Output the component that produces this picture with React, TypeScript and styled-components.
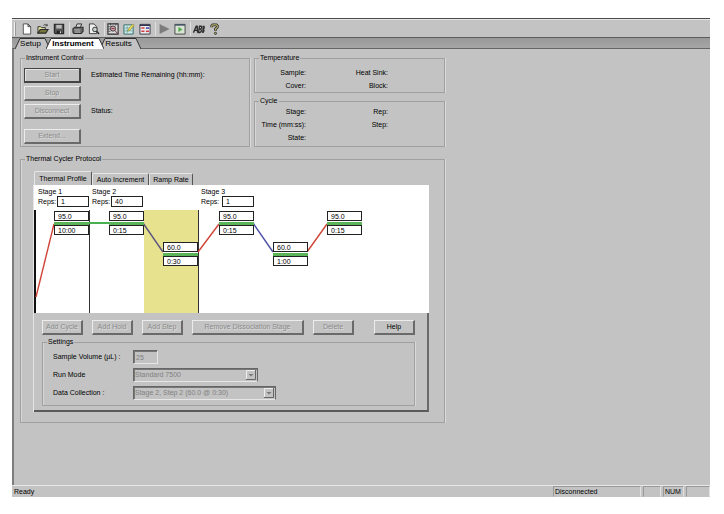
import React from "react";
import styled, { createGlobalStyle, css } from "styled-components";

const GlobalStyle = createGlobalStyle`
  *, *::before, *::after { box-sizing: border-box; }
  html, body { margin: 0; background: #fff; }
  body, button, input, select {
    font-family: "Liberation Sans", Arial, sans-serif;
    font-size: 7px;
    line-height: 8px;
    color: #000;
  }
`;

const raised = css`
  border: 1px solid;
  border-color: #ececec #6a6a6a #6a6a6a #ececec;
`;

const Page = styled.div`
  min-height: 100vh;
  padding: 18px 14px 17px 12px;
  display: flex;
`;

const AppWindow = styled.div`
  flex: 1;
  min-width: 0;
  display: flex;
  flex-direction: column;
  background: #c3c3c3;
  border-top: 1px solid #4c4c4c;
`;

const Toolbar = styled.div`
  display: flex;
  align-items: center;
  height: 18px;
  padding-left: 2px;
  border-top: 1px solid #e6e6e6;
`;

const Grip = styled.div`
  width: 2px;
  height: 14px;
  margin-right: 3px;
  border-left: 1px solid #f2f2f2;
  border-right: 1px solid #999;
`;

const Separator = styled.div`
  width: 3px;
  height: 14px;
  border-right: 1px solid #dedede;
`;

const ToolButton = styled.button`
  width: 16px;
  height: 16px;
  padding: 0;
  border: 0;
  background: none;
  display: grid;
  place-items: center;

  svg { display: block; }
`;

const PageTabs = styled.div`
  display: flex;
  height: 12px;
  padding-left: 3px;
  background: linear-gradient(#999, #a6a6a6);
  border-top: 1px solid #5c5c5c;
  border-bottom: 1px solid #666;
`;

const PageTab = styled.button<{ $active?: boolean; $width: number }>`
  position: relative;
  width: ${(p) => p.$width}px;
  height: 11px;
  margin-right: -4px;
  padding: 0 4px 0 0;
  border: 0;
  background: none;
  font-size: 8px;
  font-weight: ${(p) => (p.$active ? 700 : 400)};
  z-index: ${(p) => (p.$active ? 1 : 0)};

  svg { position: absolute; inset: 0; width: 100%; height: 100%; }
  span { position: relative; }
`;

const Main = styled.main`
  flex: 1;
  padding: 5px 6px 20px;
  border-left: 2px solid #7d7d7d;
`;

const Form = styled.div`
  max-width: 425px;
  display: flex;
  flex-direction: column;
  gap: 8px;
`;

const TopRow = styled.div`
  display: grid;
  grid-template-columns: 230fr 191fr;
  gap: 4px;
`;

const Readouts = styled.div`
  display: flex;
  flex-direction: column;
  justify-content: space-between;
`;

const GroupFrame = styled.fieldset`
  min-width: 0;
  margin: 0;
  padding: 0;
  border: 1px solid #a0a0a0;
  box-shadow: 1px 0 0 #dadada, inset 1px 0 0 #d6d6d6;

  > legend {
    height: 8px;
    margin-left: 4px;
    padding: 0 1px;
  }
`;

const GroupBody = styled.div<{ $pad: string }>`
  padding: ${(p) => p.$pad};
`;

function Group({ title, pad, children }: { title: string; pad: string; children: React.ReactNode }) {
  return (
    <GroupFrame>
      <legend>{title}</legend>
      <GroupBody $pad={pad}>{children}</GroupBody>
    </GroupFrame>
  );
}

const ControlGrid = styled.div`
  display: grid;
  grid-template-columns: 57px 1fr;
  grid-template-rows: 14px 14px 14px 22px;
  gap: 4px 10px;
  align-items: center;

  > button:last-child { align-self: end; }
`;

const Push = styled.button<{ $focus?: boolean; $grow?: boolean }>`
  height: 15px;
  min-width: 41px;
  padding: 0;
  ${raised}
  border-right-width: 2px;
  border-bottom-width: 2px;
  ${(p) => p.$focus && "border: 1px solid #444; border-right-width: 2px; border-bottom-width: 2px; box-shadow: inset 1px 1px #e4e4e4;"}
  ${(p) => p.$grow && "width: 112px; flex-shrink: 1;"}
  background: #c3c3c3;
  white-space: nowrap;

  &:disabled { color: #8a8a8a; text-shadow: 1px 1px 0 #dcdcdc; }
`;

const ReadoutGrid = styled.div`
  display: grid;
  grid-template-columns: 51px 82px;
  grid-auto-rows: 13px;
  align-items: center;
  justify-items: end;
  white-space: nowrap;
`;

const ProfileTabs = styled.div`
  display: flex;
  align-items: flex-end;
  height: 14px;
`;

const ProfileTab = styled.button<{ $active?: boolean; $width: number }>`
  width: ${(p) => p.$width}px;
  height: ${(p) => (p.$active ? 14 : 12)}px;
  padding: 0;
  border: 1px solid;
  border-color: #e6e6e6 #555 transparent #e6e6e6;
  border-bottom: 0;
  border-radius: 2px 2px 0 0;
  background: #c3c3c3;
  white-space: nowrap;
`;

const Panel = styled.div`
  border-right: 2px solid #6a6a6a;
  border-bottom: 2px solid #5a5a5a;
  box-shadow: -1px 0 0 #e6e6e6;
`;

const PanelBody = styled.div`
  padding: 7px 12px 4px 8px;
`;

const ButtonRow = styled.div`
  display: flex;
  gap: 9px;
  padding-bottom: 3px;

  > button:last-child { margin-left: auto; }
`;

const Chart = styled.div`
  position: relative;
  height: 128px;
  margin-right: -2px;
  background: #fff;
  overflow: hidden;

  > svg { position: absolute; top: 0; left: 0; }
`;

const StageHead = styled.div<{ $x: number }>`
  position: absolute;
  top: 3px;
  left: ${(p) => p.$x}px;
`;

const RepsLabel = styled.label<{ $x: number; $span: number }>`
  position: absolute;
  top: 11px;
  left: ${(p) => p.$x}px;
  width: ${(p) => p.$span}px;
  display: flex;
  justify-content: space-between;
  align-items: center;
`;

const NodeBox = styled.div<{ $x: number; $y: number }>`
  position: absolute;
  left: ${(p) => p.$x}px;
  top: ${(p) => p.$y}px;
  width: 35px;
  display: flex;
  flex-direction: column;
`;

const StepBar = styled.div`
  height: 4px;
  padding-top: 1px;
  background: #5cb458;
  border-top: 1px solid #fff;
`;

const ValueField = styled.input<{ $reps?: boolean }>`
  display: block;
  width: ${(p) => (p.$reps ? 32 : 35)}px;
  height: ${(p) => (p.$reps ? 11 : 10)}px;
  padding: 0 0 0 3px;
  border: 1px solid #222;
  border-radius: 0;
  background: #fff;
`;

const SettingsGrid = styled.div`
  display: grid;
  grid-template-columns: 80px 1fr;
  grid-auto-rows: 14px;
  row-gap: 4px;
  align-items: center;
`;

const sunken = css`
  border: 1px solid;
  border-color: #666 #e6e6e6 #e6e6e6 #666;
  box-shadow: inset 1px 1px #777;
  background: #c3c3c3;
  opacity: 1;
  color: #808080;
`;

const VolumeField = styled.input`
  width: 25px;
  height: 14px;
  padding: 0 2px;
  ${sunken}
`;

const DropFrame = styled.div<{ $width: number }>`
  position: relative;
  width: ${(p) => p.$width}px;
  height: 14px;

  > svg { position: absolute; right: 2px; top: 2px; pointer-events: none; }
`;

const Drop = styled.select`
  display: block;
  width: 100%;
  height: 14px;
  padding: 0 12px 0 1px;
  appearance: none;
  border-radius: 0;
  ${sunken}
  border-right-color: #666;
`;

const StatusBar = styled.footer`
  display: flex;
  gap: 2px;
  height: 12px;
  border-top: 1px solid #e8e8e8;
`;

const StatusCell = styled.div<{ $width?: number }>`
  ${(p) => (p.$width ? `width: ${p.$width}px; border: 1px solid; border-color: #999 #e2e2e2 transparent #999;` : "flex: 1; padding-top: 1px;")}
  padding-left: ${(p) => (p.$width ? 1 : 2)}px;
  line-height: 10px;
  white-space: nowrap;
`;

const Ico = ({ children }: { children: React.ReactNode }) => (
  <svg width="12" height="12" viewBox="0 0 13 13" fill="none" stroke="#2c2c2c" aria-hidden="true">
    {children}
  </svg>
);

const icons: Record<string, React.ReactNode> = {
  New: <path d="M2.500 1h5l3 3v8h-8zM7.500 1v3h3" fill="#fff" strokeWidth=".8" />,
  Open: (
    <>
      <path d="M1 11V4h3l1 1h4v2" fill="#e9e7a0" />
      <path d="M1 11l2.500-4H12l-2.500 4z" fill="#77743c" strokeWidth="1.200" />
      <path d="M7 3c1-2 3-2 4 0m0-2v2H9" strokeWidth=".8" />
    </>
  ),
  Save: (
    <>
      <path d="M1.500 1.500h10v10h-9l-1-1z" fill="#555" strokeWidth="1.300" />
      <path d="M3.500 2h6v4h-6z" fill="#b8b8b8" stroke="none" />
      <path d="M4 8.500h5V11H4z" fill="#222" stroke="none" />
      <path d="M7.500 9h1.200v2H7.500z" fill="#ddd" stroke="none" />
    </>
  ),
  Print: (
    <>
      <path d="M4 5l1.500-4h5L9 5z" fill="#ddd" />
      <path d="M1 6l2-1.500h9V9l-2 2.500H2L1 10z" fill="#666" strokeWidth="1.100" />
      <path d="M2.500 7.500h6.500M3 9.800h6" stroke="#ccc" strokeWidth=".9" />
    </>
  ),
  Preview: (
    <>
      <path d="M1.500 1h5l3 3v7.500h-8z" fill="#eee" strokeWidth=".9" />
      <circle cx="7.500" cy="7" r="2.500" fill="#c9d0d0" />
      <path d="M9.300 9l2.700 3" strokeWidth="1.600" />
    </>
  ),
  "Zoom plate": (
    <>
      <path d="M1 1h11v11H1z" fill="#ddd" strokeWidth="1.200" />
      <path d="M1 4h3M1 6.500h3M1 9h3M4 1v2M9.500 1v2" strokeWidth=".7" />
      <circle cx="6.500" cy="6" r="2.800" fill="#dba9b2" />
      <path d="M5 6h3M8.500 8l3 3.500" stroke="#772534" />
    </>
  ),
  "Edit plate": (
    <>
      <path d="M1 2h10v10H1z" fill="#d3e9e9" stroke="#2f6a6a" />
      <path d="M1 5.500h10M1 8.500h10M4.500 3v8" stroke="#599" strokeWidth=".7" />
      <path d="M5 9l1-3 4.500-5L12 2.500 7.500 8z" fill="#e7d95c" stroke="#7e7d30" strokeWidth=".6" />
    </>
  ),
  "Plate list": (
    <>
      <path d="M1 1.500h11v10.500H1z" fill="#eee" stroke="#334" />
      <path d="M1 2.500h11" stroke="#335" strokeWidth="1.500" />
      <path d="M2.500 5.500H6M2.500 9H6" stroke="#cf3e46" strokeWidth="1.700" />
      <path d="M7.500 5.500H11" stroke="#3c49a8" strokeWidth="1.700" />
      <path d="M7.500 9H11" stroke="#cf3e46" strokeWidth="1.700" />
    </>
  ),
  Run: <path d="M2 1.500l10 5-10 5z" fill="#7c7c7c" stroke="#7c7c7c" strokeWidth=".5" />,
  "Run view": (
    <>
      <path d="M1 1.500h11v10.500H1z" fill="#d9e5d4" stroke="#444" />
      <path d="M1 2h11" stroke="#456" strokeWidth="1.800" />
      <path d="M5 4.500l4 2.500-4 2.500z" fill="#55a74c" stroke="#55a74c" strokeWidth=".4" />
    </>
  ),
  Text: (
    <>
      <path d="M.5 10.500L3.500 3.500h1l.5 7M2 8h3" strokeWidth="1.500" />
      <path d="M6 10.300l1-6.800h2q1.500 1.500-1 3 2.500 2-.5 3.800zM6.500 6.500h2" strokeWidth="1.400" />
      <path d="M10.500 10.300l.5-6.800h1q1 2-1 3 2 1.500 0 3.800z" strokeWidth="1.200" />
    </>
  ),
  Help: (
    <>
      <path d="M3 4.500V3l1-1h4l1 1v1.500L7 6.500v2" strokeWidth="3" />
      <path d="M3 4.500V3l1-1h4l1 1v1.500L7 6.500V8" stroke="#b3af68" strokeWidth="1.200" />
      <circle cx="7" cy="11.200" r="1.200" fill="#aaa65a" strokeWidth=".9" />
    </>
  ),
};

const toolGroups = [
  ["New", "Open", "Save"],
  ["Print", "Preview"],
  ["Zoom plate", "Edit plate", "Plate list"],
  ["Run", "Run view"],
  ["Text", "Help"],
];

const pageTabs = [
  { label: "Setup", width: 35 },
  { label: "Instrument", width: 58, active: true },
  { label: "Results", width: 41 },
];

const stages = [
  { x: 4, field: 23, reps: "1" },
  { x: 58, field: 77, reps: "40" },
  { x: 167, field: 188, reps: "1" },
];

const steps = [
  { x: 20, y: 26, temp: "95.0", time: "10:00" },
  { x: 75, y: 26, temp: "95.0", time: "0:15" },
  { x: 129, y: 57, temp: "60.0", time: "0:30" },
  { x: 185, y: 26, temp: "95.0", time: "0:15" },
  { x: 239, y: 57, temp: "60.0", time: "1:00" },
  { x: 293, y: 26, temp: "95.0", time: "0:15" },
];

const ramps = [
  { d: "M2 112L20 39", color: "#cf4436" },
  { d: "M109 38L129 67", color: "#5b5580" },
  { d: "M164 67L185 39", color: "#cf4436" },
  { d: "M219 38L239 67", color: "#4c50a6" },
  { d: "M273 67L293 39", color: "#cf4436" },
];

function DropDown({ id, value, width }: { id: string; value: string; width: number }) {
  return (
    <DropFrame $width={width}>
      <Drop id={id} disabled>
        <option>{value}</option>
      </Drop>
      <svg width="10" height="10" viewBox="0 0 10 10" aria-hidden="true">
        <path d="M0 0h10v10H0z" fill="#c3c3c3" />
        <path d="M.5 10V.5H10" fill="none" stroke="#eee" />
        <path d="M0 9.500h9.500V0" fill="none" stroke="#666" />
        <path d="M2.500 4h5L5 6.500z" fill="#777" />
      </svg>
    </DropFrame>
  );
}

function ProfileChart() {
  return (
    <Chart>
      <svg width="395" height="128" viewBox="0 0 395 128" fill="none" aria-hidden="true">
        <path d="M110 25h54v103h-54z" fill="#e7e28e" />
        <path d="M1 25v103" stroke="#111" strokeWidth="2" />
        <path d="M55.500 25v103M164.500 25v103" stroke="#333" />
        {ramps.map((r) => (
          <path key={r.d} d={r.d} stroke={r.color} strokeWidth="1.400" />
        ))}
        <path d="M55 38h20" stroke="#49b052" strokeWidth="2" />
      </svg>
      {stages.map((s, i) => (
        <React.Fragment key={s.x}>
          <StageHead $x={s.x}>Stage {i + 1}</StageHead>
          <RepsLabel $x={s.x} $span={s.field - s.x + 32}>
            Reps:
            <ValueField $reps aria-label={`Stage ${i + 1} reps`} defaultValue={s.reps} />
          </RepsLabel>
        </React.Fragment>
      ))}
      {steps.map((s, i) => (
        <NodeBox key={s.x} $x={s.x} $y={s.y}>
          <ValueField aria-label={`Step ${i + 1} temperature`} defaultValue={s.temp} />
          <StepBar />
          <ValueField aria-label={`Step ${i + 1} time`} defaultValue={s.time} />
        </NodeBox>
      ))}
    </Chart>
  );
}

export default function App() {
  return (
    <>
      <GlobalStyle />
      <Page>
        <AppWindow>
          <Toolbar>
            <Grip />
            {toolGroups.map((group, g) => (
              <React.Fragment key={group[0]}>
                {g > 0 && <Separator />}
                {group.map((name) => (
                  <ToolButton key={name} type="button" aria-label={name}>
                    <Ico>{icons[name]}</Ico>
                  </ToolButton>
                ))}
              </React.Fragment>
            ))}
          </Toolbar>
          <PageTabs role="tablist">
            {pageTabs.map((t) => (
              <PageTab key={t.label} type="button" role="tab" aria-selected={!!t.active} $active={t.active} $width={t.width}>
                <svg viewBox={`0 0 ${t.width} 11`} preserveAspectRatio="none" aria-hidden="true">
                  <path
                    d={`M0 11L5 .5H${t.width - 5}L${t.width} 11`}
                    fill={t.active ? "#fff" : "#c3c3c3"}
                    stroke="#333"
                  />
                </svg>
                <span>{t.label}</span>
              </PageTab>
            ))}
          </PageTabs>
          <Main>
            <Form>
              <TopRow>
                <Group title="Instrument Control" pad="6px 3px 2px">
                  <ControlGrid>
                    <Push type="button" disabled $focus>Start</Push>
                    <span>Estimated Time Remaining (hh:mm):</span>
                    <Push type="button" disabled>Stop</Push>
                    <span />
                    <Push type="button" disabled>Disconnect</Push>
                    <span>Status:</span>
                    <Push type="button" disabled>Extend...</Push>
                  </ControlGrid>
                </Group>
                <Readouts>
                  <Group title="Temperature" pad="4px 0 0">
                    <ReadoutGrid>
                      <span>Sample:</span>
                      <span>Heat Sink:</span>
                      <span>Cover:</span>
                      <span>Block:</span>
                    </ReadoutGrid>
                  </Group>
                  <Group title="Cycle" pad="0 0 2px">
                    <ReadoutGrid>
                      <span>Stage:</span>
                      <span>Rep:</span>
                      <span>Time (mm:ss):</span>
                      <span>Step:</span>
                      <span>State:</span>
                    </ReadoutGrid>
                  </Group>
                </Readouts>
              </TopRow>
              <Group title="Thermal Cycler Protocol" pad="8px 15px 10px 13px">
                <ProfileTabs role="tablist">
                  <ProfileTab type="button" role="tab" aria-selected $active $width={58}>Thermal Profile</ProfileTab>
                  <ProfileTab type="button" role="tab" $width={57}>Auto Increment</ProfileTab>
                  <ProfileTab type="button" role="tab" $width={44}>Ramp Rate</ProfileTab>
                </ProfileTabs>
                <Panel>
                  <ProfileChart />
                  <PanelBody>
                    <ButtonRow>
                      <Push type="button" disabled>Add Cycle</Push>
                      <Push type="button" disabled>Add Hold</Push>
                      <Push type="button" disabled>Add Step</Push>
                      <Push type="button" disabled $grow>Remove Dissociation Stage</Push>
                      <Push type="button" disabled>Delete</Push>
                      <Push type="button">Help</Push>
                    </ButtonRow>
                    <Group title="Settings" pad="4px 10px 5px">
                      <SettingsGrid>
                        <label htmlFor="volume">Sample Volume (µL) :</label>
                        <VolumeField id="volume" defaultValue="25" disabled />
                        <label htmlFor="mode">Run Mode</label>
                        <DropDown id="mode" value="Standard 7500" width={125} />
                        <label htmlFor="collection">Data Collection :</label>
                        <DropDown id="collection" value="Stage 2, Step 2 (60.0 @ 0:30)" width={143} />
                      </SettingsGrid>
                    </Group>
                  </PanelBody>
                </Panel>
              </Group>
            </Form>
          </Main>
          <StatusBar>
            <StatusCell>Ready</StatusCell>
            <StatusCell $width={88}>Disconnected</StatusCell>
            <StatusCell $width={18} />
            <StatusCell $width={21}>NUM</StatusCell>
            <StatusCell $width={24} />
          </StatusBar>
        </AppWindow>
      </Page>
    </>
  );
}
